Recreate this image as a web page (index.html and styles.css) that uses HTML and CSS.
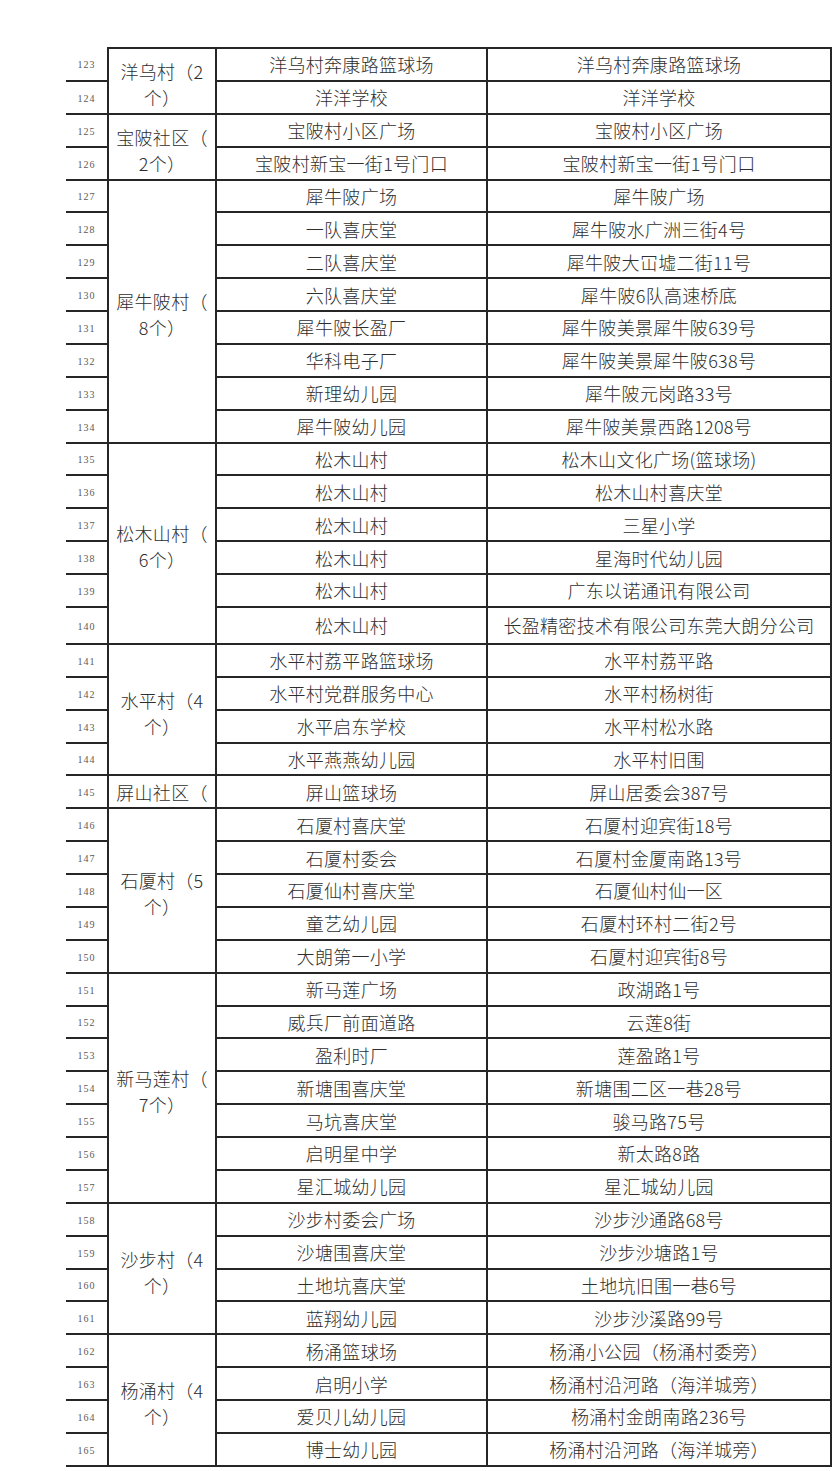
FILE: index.html
```html
<!DOCTYPE html>
<html lang="zh-CN">
<head>
<meta charset="utf-8">
<title>点位表</title>
<link rel="stylesheet" href="styles.css">
</head>
<body>
<div class="sheet">
<table class="grid">
<colgroup>
<col class="c-n"><col class="c-v"><col class="c-l"><col class="c-a">
</colgroup>
<tbody>
<tr><td class="n first">123</td><td class="v" rowspan="2">洋乌村（2<br>个）</td><td>洋乌村奔康路篮球场</td><td>洋乌村奔康路篮球场</td></tr>
<tr><td class="n">124</td><td>洋洋学校</td><td>洋洋学校</td></tr>
<tr><td class="n">125</td><td class="v" rowspan="2">宝陂社区（<br>2个）</td><td>宝陂村小区广场</td><td>宝陂村小区广场</td></tr>
<tr><td class="n">126</td><td>宝陂村新宝一街1号门口</td><td>宝陂村新宝一街1号门口</td></tr>
<tr><td class="n">127</td><td class="v" rowspan="8">犀牛陂村（<br>8个）</td><td>犀牛陂广场</td><td>犀牛陂广场</td></tr>
<tr><td class="n">128</td><td>一队喜庆堂</td><td>犀牛陂水广洲三街4号</td></tr>
<tr><td class="n">129</td><td>二队喜庆堂</td><td>犀牛陂大冚墟二街11号</td></tr>
<tr><td class="n">130</td><td>六队喜庆堂</td><td>犀牛陂6队高速桥底</td></tr>
<tr><td class="n">131</td><td>犀牛陂长盈厂</td><td>犀牛陂美景犀牛陂639号</td></tr>
<tr><td class="n">132</td><td>华科电子厂</td><td>犀牛陂美景犀牛陂638号</td></tr>
<tr><td class="n">133</td><td>新理幼儿园</td><td>犀牛陂元岗路33号</td></tr>
<tr><td class="n">134</td><td>犀牛陂幼儿园</td><td>犀牛陂美景西路1208号</td></tr>
<tr><td class="n">135</td><td class="v" rowspan="6">松木山村（<br>6个）</td><td>松木山村</td><td>松木山文化广场(篮球场)</td></tr>
<tr><td class="n">136</td><td>松木山村</td><td>松木山村喜庆堂</td></tr>
<tr><td class="n">137</td><td>松木山村</td><td>三星小学</td></tr>
<tr><td class="n">138</td><td>松木山村</td><td>星海时代幼儿园</td></tr>
<tr><td class="n">139</td><td>松木山村</td><td>广东以诺通讯有限公司</td></tr>
<tr class="tall"><td class="n">140</td><td>松木山村</td><td>长盈精密技术有限公司东莞大朗分公司</td></tr>
<tr><td class="n">141</td><td class="v" rowspan="4">水平村（4<br>个）</td><td>水平村荔平路篮球场</td><td>水平村荔平路</td></tr>
<tr><td class="n">142</td><td>水平村党群服务中心</td><td>水平村杨树街</td></tr>
<tr><td class="n">143</td><td>水平启东学校</td><td>水平村松水路</td></tr>
<tr><td class="n">144</td><td>水平燕燕幼儿园</td><td>水平村旧围</td></tr>
<tr><td class="n">145</td><td class="v one">屏山社区（</td><td>屏山篮球场</td><td>屏山居委会387号</td></tr>
<tr><td class="n">146</td><td class="v" rowspan="5">石厦村（5<br>个）</td><td>石厦村喜庆堂</td><td>石厦村迎宾街18号</td></tr>
<tr><td class="n">147</td><td>石厦村委会</td><td>石厦村金厦南路13号</td></tr>
<tr><td class="n">148</td><td>石厦仙村喜庆堂</td><td>石厦仙村仙一区</td></tr>
<tr><td class="n">149</td><td>童艺幼儿园</td><td>石厦村环村二街2号</td></tr>
<tr><td class="n">150</td><td>大朗第一小学</td><td>石厦村迎宾街8号</td></tr>
<tr><td class="n">151</td><td class="v" rowspan="7">新马莲村（<br>7个）</td><td>新马莲广场</td><td>政湖路1号</td></tr>
<tr><td class="n">152</td><td>威兵厂前面道路</td><td>云莲8街</td></tr>
<tr><td class="n">153</td><td>盈利时厂</td><td>莲盈路1号</td></tr>
<tr><td class="n">154</td><td>新塘围喜庆堂</td><td>新塘围二区一巷28号</td></tr>
<tr><td class="n">155</td><td>马坑喜庆堂</td><td>骏马路75号</td></tr>
<tr><td class="n">156</td><td>启明星中学</td><td>新太路8路</td></tr>
<tr><td class="n">157</td><td>星汇城幼儿园</td><td>星汇城幼儿园</td></tr>
<tr><td class="n">158</td><td class="v" rowspan="4">沙步村（4<br>个）</td><td>沙步村委会广场</td><td>沙步沙通路68号</td></tr>
<tr><td class="n">159</td><td>沙塘围喜庆堂</td><td>沙步沙塘路1号</td></tr>
<tr><td class="n">160</td><td>土地坑喜庆堂</td><td>土地坑旧围一巷6号</td></tr>
<tr><td class="n">161</td><td>蓝翔幼儿园</td><td>沙步沙溪路99号</td></tr>
<tr><td class="n">162</td><td class="v" rowspan="4">杨涌村（4<br>个）</td><td>杨涌篮球场</td><td>杨涌小公园（杨涌村委旁）</td></tr>
<tr><td class="n">163</td><td>启明小学</td><td>杨涌村沿河路（海洋城旁）</td></tr>
<tr><td class="n">164</td><td>爱贝儿幼儿园</td><td>杨涌村金朗南路236号</td></tr>
<tr><td class="n">165</td><td>博士幼儿园</td><td>杨涌村沿河路（海洋城旁）</td></tr>
</tbody>
</table>
</div>
</body>
</html>
```
FILE: styles.css
```css
html, body {
  margin: 0;
  padding: 0;
  background: #ffffff;
}

.sheet {
  padding: 47px 0 0 66px;
}

.grid {
  border-collapse: collapse;
  table-layout: fixed;
  width: 765px;
  font-family: "Noto Sans CJK SC", "Noto Sans CJK JP", sans-serif;
  font-weight: 300;
  color: #2e2e2e;
}

.c-n { width: 42px; }
.c-v { width: 108px; }
.c-l { width: 271px; }
.c-a { width: 344px; }

.grid tr {
  height: 32.88px;
}

.grid tr.tall {
  height: 37px;
}

.grid td {
  border: 2px solid #262626;
  padding: 0;
  text-align: center;
  vertical-align: middle;
  font-size: 18px;
  line-height: 22px;
  letter-spacing: 0.3px;
  white-space: nowrap;
}

.grid td.n {
  border-left: none;
  padding-top: 3px;
  font-family: "Liberation Serif", "DejaVu Serif", serif;
  font-weight: 400;
  font-size: 10px;
  line-height: 14px;
  letter-spacing: 1px;
  color: #5a5a5a;
}

.grid td.n.first {
  border-top: none;
}

.grid td.v {
  line-height: 26px;
  padding-top: 6px;
}

.grid td.v.one {
  padding-top: 0;
  line-height: 22px;
}
```
